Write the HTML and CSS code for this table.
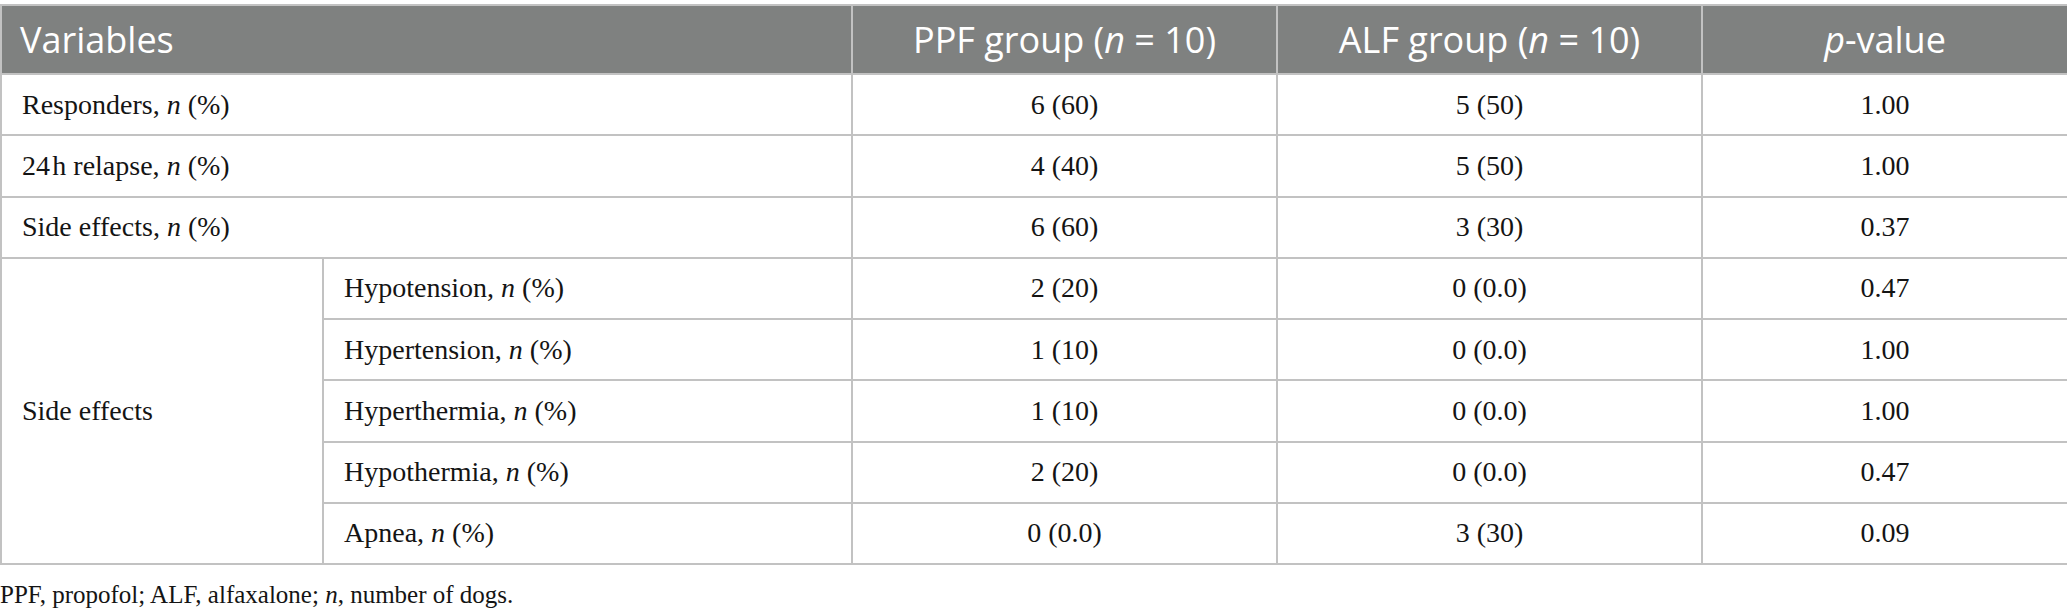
FILE: index.html
```html
<!DOCTYPE html>
<html lang="en">
<head>
<meta charset="utf-8">
<title>Table</title>
<link rel="stylesheet" href="styles.css">
</head>
<body>
<div class="wrap">
<table class="data">
  <colgroup>
    <col class="c1"><col class="c2"><col class="c3"><col class="c4"><col class="c5">
  </colgroup>
  <thead>
    <tr>
      <th colspan="2" class="left">Variables</th>
      <th>PPF group (<i>n</i> = 10)</th>
      <th>ALF group (<i>n</i> = 10)</th>
      <th><i>p</i>-value</th>
    </tr>
  </thead>
  <tbody>
    <tr><td colspan="2" class="label">Responders, <i>n</i> (%)</td><td>6 (60)</td><td>5 (50)</td><td>1.00</td></tr>
    <tr><td colspan="2" class="label">24&#8202;h relapse, <i>n</i> (%)</td><td>4 (40)</td><td>5 (50)</td><td>1.00</td></tr>
    <tr><td colspan="2" class="label">Side effects, <i>n</i> (%)</td><td>6 (60)</td><td>3 (30)</td><td>0.37</td></tr>
    <tr><td rowspan="5" class="label">Side effects</td><td class="label">Hypotension, <i>n</i> (%)</td><td>2 (20)</td><td>0 (0.0)</td><td>0.47</td></tr>
    <tr><td class="label">Hypertension, <i>n</i> (%)</td><td>1 (10)</td><td>0 (0.0)</td><td>1.00</td></tr>
    <tr><td class="label">Hyperthermia, <i>n</i> (%)</td><td>1 (10)</td><td>0 (0.0)</td><td>1.00</td></tr>
    <tr><td class="label">Hypothermia, <i>n</i> (%)</td><td>2 (20)</td><td>0 (0.0)</td><td>0.47</td></tr>
    <tr><td class="label">Apnea, <i>n</i> (%)</td><td>0 (0.0)</td><td>3 (30)</td><td>0.09</td></tr>
  </tbody>
</table>
<p class="note">PPF, propofol; ALF, alfaxalone; <i>n</i>, number of dogs.</p>
</div>
</body>
</html>
```
FILE: styles.css
```css
html, body {
  margin: 0;
  padding: 0;
  background: #ffffff;
}
.wrap {
  padding-top: 4px;
  width: 2067px;
}
.data {
  border-collapse: collapse;
  width: 2067px;
  table-layout: fixed;
  font-family: "Liberation Serif", "Times New Roman", serif;
  font-size: 28px;
  color: #141414;
}
.c1 { width: 322px; }
.c2 { width: 529px; }
.c3 { width: 425px; }
.c4 { width: 425px; }
.c5 { width: 366px; }
.data th {
  background: #7f8180;
  color: #ffffff;
  font-family: "Open Sans", "Noto Sans", sans-serif;
  font-weight: 400;
  font-size: 36px;
  height: 69px;
  padding: 0 18px;
  text-align: center;
  border: 2px solid #c2c2c2;
  box-sizing: border-box;
}
.data th.left { text-align: left; }
.data td {
  height: 61.25px;
  padding: 0 20px;
  text-align: center;
  vertical-align: middle;
  border: 2px solid #c2c2c2;
  box-sizing: border-box;
}
.data td.label { text-align: left; }
.note {
  margin: 16px 0 0 0;
  font-family: "Liberation Serif", "Times New Roman", serif;
  font-size: 25px;
  color: #141414;
}
```
